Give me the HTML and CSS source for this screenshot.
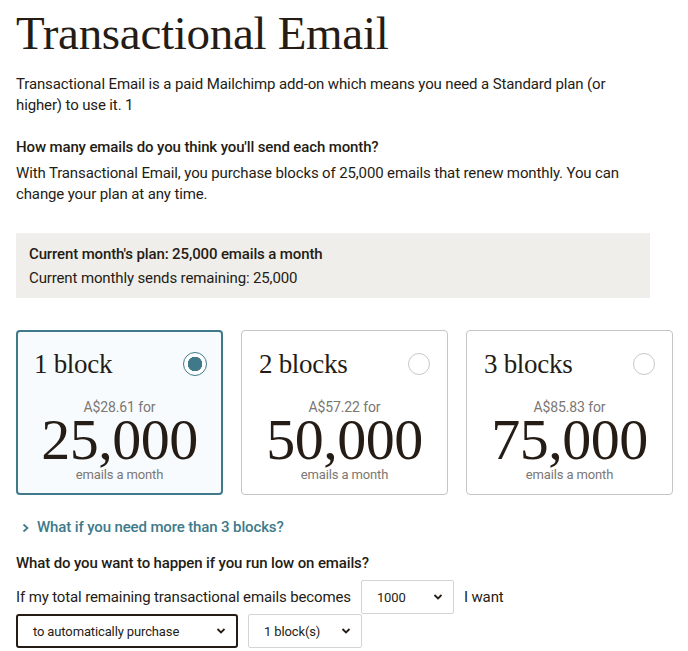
FILE: index.html
```html
<!DOCTYPE html>
<html lang="en">
<head>
  <meta charset="UTF-8" />
  <title>Transactional Email</title>
  <link rel="stylesheet" href="styles.css">
</head>
<body>
  <div class="page">
    <h1>Transactional Email</h1>
    <p class="intro">Transactional Email is a paid Mailchimp add-on which means you need a Standard plan (or higher) to use it. 1</p>

    <h2>How many emails do you think you'll send each month?</h2>
    <p class="lead">With Transactional Email, you purchase blocks of 25,000 emails that renew monthly. You can change your plan at any time.</p>

    <div class="plan-box">
      <div class="plan-title">Current month's plan: 25,000 emails a month</div>
      <div>Current monthly sends remaining: 25,000</div>
    </div>

    <div class="blocks">
      <div class="block selected">
        <div class="block-head">
          <span class="block-name">1 block</span>
          <span class="radio"></span>
        </div>
        <div class="price">A$28.61 for</div>
        <div class="amount">25,000</div>
        <div class="per">emails a month</div>
      </div>
      <div class="block">
        <div class="block-head">
          <span class="block-name">2 blocks</span>
          <span class="radio"></span>
        </div>
        <div class="price">A$57.22 for</div>
        <div class="amount">50,000</div>
        <div class="per">emails a month</div>
      </div>
      <div class="block">
        <div class="block-head">
          <span class="block-name">3 blocks</span>
          <span class="radio"></span>
        </div>
        <div class="price">A$85.83 for</div>
        <div class="amount">75,000</div>
        <div class="per">emails a month</div>
      </div>
    </div>

    <a class="more" href="#">
      <svg width="8" height="10" viewBox="0 0 8 10"><path d="M1.5 1.5 L5.5 5 L1.5 8.5" fill="none" stroke="currentColor" stroke-width="1.7"/></svg>
      What if you need more than 3 blocks?
    </a>

    <h2 class="low">What do you want to happen if you run low on emails?</h2>
    <div class="rule">
      <span>If my total remaining transactional emails becomes</span>
      <div class="select sel-count"><span>1000</span><svg width="10" height="6" viewBox="0 0 10 6"><path d="M1.5 1 L5 4.5 L8.5 1" fill="none" stroke="currentColor" stroke-width="1.8"/></svg></div>
      <span>I want</span>
    </div>
    <div class="rule second">
      <div class="select sel-action"><span>to automatically purchase</span><svg width="10" height="6" viewBox="0 0 10 6"><path d="M1.5 1 L5 4.5 L8.5 1" fill="none" stroke="currentColor" stroke-width="1.8"/></svg></div>
      <div class="select sel-blocks"><span>1 block(s)</span><svg width="10" height="6" viewBox="0 0 10 6"><path d="M1.5 1 L5 4.5 L8.5 1" fill="none" stroke="currentColor" stroke-width="1.8"/></svg></div>
    </div>
  </div>
</body>
</html>
```

FILE: styles.css
```css
body {
  margin: 0;
  font-family: Roboto, "Liberation Sans", Arial, sans-serif;
  font-size: 15px;
  line-height: 21px;
  letter-spacing: -0.13px;
  color: #241c15;
  background: #ffffff;
}
.page {
  width: 657px;
  padding: 0 15px 0 16px;
}
h1 {
  font-family: "Liberation Serif", "Times New Roman", serif;
  font-weight: normal;
  font-size: 47px;
  line-height: 56px;
  margin: 5px 0 0;
  letter-spacing: -0.3px;
}
.intro {
  width: 634px;
  margin: 13px 0 0;
}
h2 {
  font-size: 15px;
  font-weight: 500;
  margin: 21px 0 0;
  line-height: 21px;
}
.lead {
  width: 634px;
  margin: 5px 0 0;
}
.plan-box {
  width: 608px;
  background: #efeeea;
  margin-top: 28px;
  padding: 9px 13px 8px;
  line-height: 24px;
}
.plan-title {
  font-weight: 500;
}
.blocks {
  display: grid;
  grid-template-columns: repeat(3, 1fr);
  gap: 18px;
  margin-top: 32px;
}
.block {
  height: 163px;
  border: 1px solid #c5c5c5;
  border-radius: 4px;
  text-align: center;
}
.block.selected {
  border: 2px solid #40798a;
  background: #f8fbfe;
  height: 161px;
}
.block-head {
  display: flex;
  justify-content: space-between;
  align-items: center;
  padding: 17px 17px 0 17px;
}
.selected .block-head {
  padding: 16px 16px 0 16px;
}
.block-name {
  font-family: "Liberation Serif", "Times New Roman", serif;
  font-size: 27px;
  line-height: 32px;
  letter-spacing: -0.3px;
}
.radio {
  width: 22px;
  height: 22px;
  border: 1px solid #c8c8c8;
  border-radius: 50%;
  box-sizing: border-box;
}
.selected .radio {
  width: 24px;
  height: 24px;
  border-color: #40798a;
  background: radial-gradient(circle, #40798a 0 7px, #ffffff 7.5px);
  margin-right: -2px;
}
.price {
  margin-top: 19px;
  color: #7b7773;
  font-size: 14px;
  line-height: 16px;
}
.amount {
  font-family: "Liberation Serif", "Times New Roman", serif;
  font-size: 58px;
  line-height: 50px;
  letter-spacing: -0.5px;
}
.per {
  color: #7b7773;
  font-size: 13px;
  line-height: 16px;
  margin-top: 2px;
}
.more {
  display: flex;
  align-items: center;
  gap: 7px;
  margin: 22px 0 0 6px;
  color: #3e7a89;
  font-weight: 500;
  text-decoration: none;
}
.low {
  margin-top: 15px;
}
.rule {
  display: flex;
  align-items: center;
  margin-top: 6px;
}
.rule.second {
  margin-top: 0;
  gap: 10px;
}
.select {
  display: flex;
  align-items: center;
  justify-content: space-between;
  box-sizing: border-box;
  height: 34px;
  border: 1px solid #d4d4d4;
  border-radius: 2px;
  font-size: 13px;
}
.sel-count {
  width: 93px;
  padding: 0 10px 0 15px;
  margin: 0 10px 0 10px;
}
.sel-action {
  width: 222px;
  border: 2px solid #241c15;
  border-radius: 3px;
  padding: 0 10px 0 15px;
}
.sel-blocks {
  width: 114px;
  padding: 0 10px 0 15px;
}
```
